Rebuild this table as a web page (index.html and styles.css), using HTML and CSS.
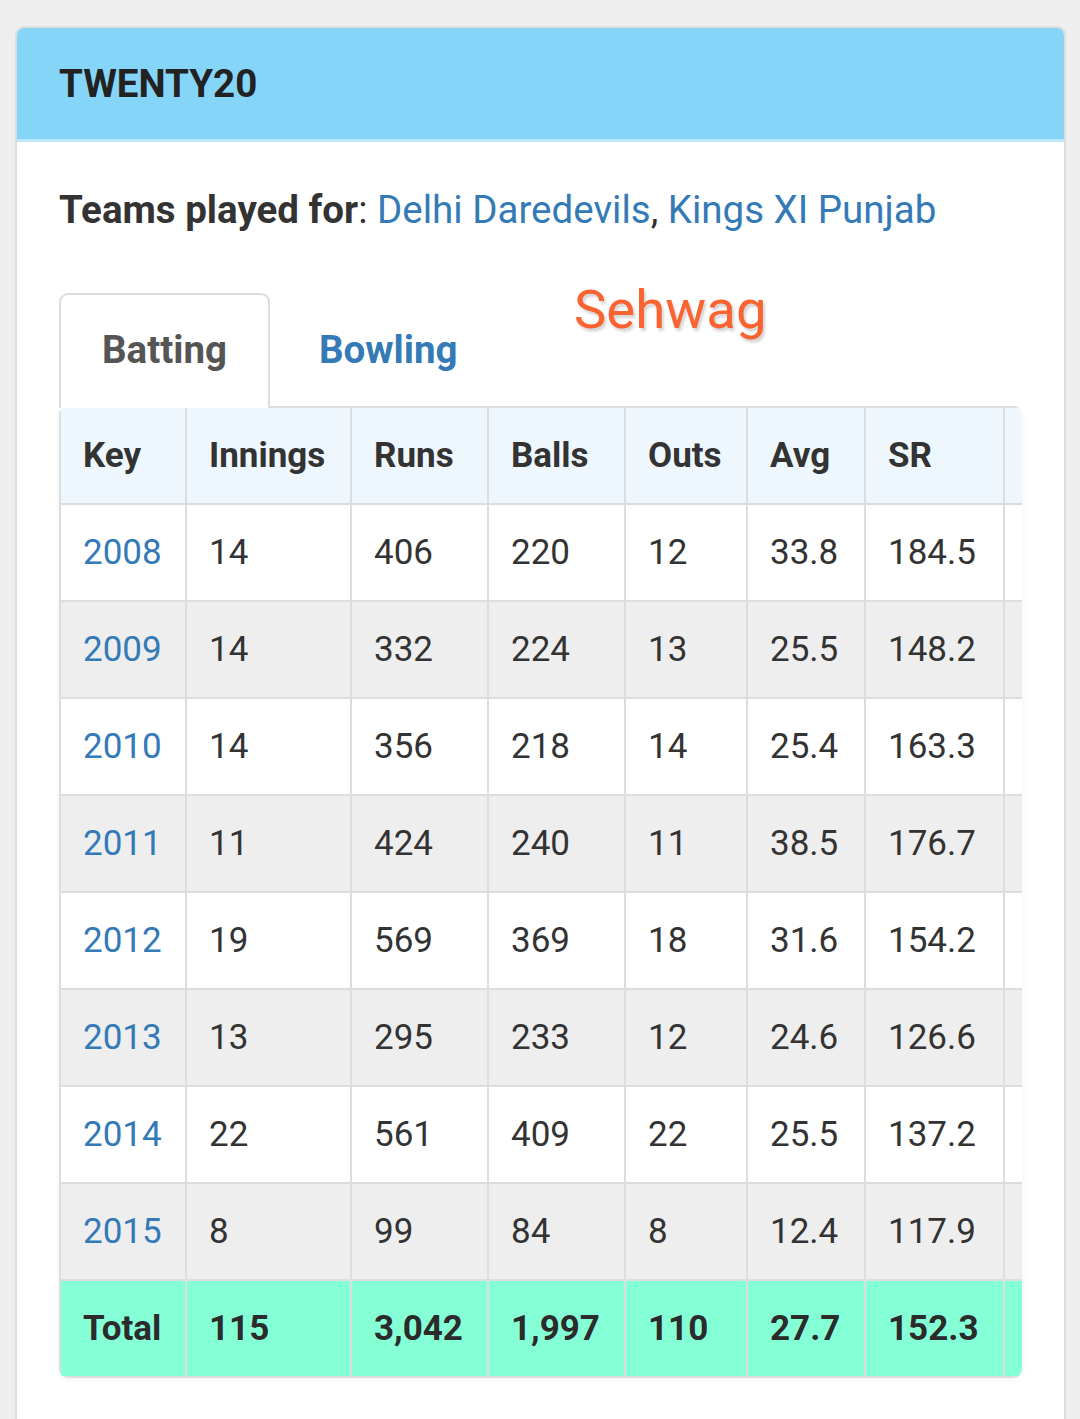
FILE: index.html
```html
<!DOCTYPE html>
<html>
<head>
<meta charset="utf-8">
<link rel="stylesheet" href="styles.css">
</head>
<body>
<div class="card">
  <div class="card-head"><h2 class="card-title">TWENTY20</h2></div>
  <div class="card-body">
    <p class="teams"><b>Teams played for</b>: <a class="link">Delhi Daredevils</a>, <a class="link">Kings XI Punjab</a></p>
    <span class="player">Sehwag</span>
    <ul class="tabs">
      <li class="tab active">Batting</li>
      <li class="tab">Bowling</li>
    </ul>
    <div class="table-wrap">
      <table class="stats">
        <colgroup>
          <col class="c-key"><col class="c-inn"><col class="c-runs"><col class="c-balls"><col class="c-outs"><col class="c-avg"><col class="c-sr"><col class="c-hs">
        </colgroup>
        <thead>
          <tr><th>Key</th><th>Innings</th><th>Runs</th><th>Balls</th><th>Outs</th><th>Avg</th><th>SR</th><th></th></tr>
        </thead>
        <tbody>
          <tr><td class="yr">2008</td><td>14</td><td>406</td><td>220</td><td>12</td><td>33.8</td><td>184.5</td><td></td></tr>
          <tr><td class="yr">2009</td><td>14</td><td>332</td><td>224</td><td>13</td><td>25.5</td><td>148.2</td><td></td></tr>
          <tr><td class="yr">2010</td><td>14</td><td>356</td><td>218</td><td>14</td><td>25.4</td><td>163.3</td><td></td></tr>
          <tr><td class="yr">2011</td><td>11</td><td>424</td><td>240</td><td>11</td><td>38.5</td><td>176.7</td><td></td></tr>
          <tr><td class="yr">2012</td><td>19</td><td>569</td><td>369</td><td>18</td><td>31.6</td><td>154.2</td><td></td></tr>
          <tr><td class="yr">2013</td><td>13</td><td>295</td><td>233</td><td>12</td><td>24.6</td><td>126.6</td><td></td></tr>
          <tr><td class="yr">2014</td><td>22</td><td>561</td><td>409</td><td>22</td><td>25.5</td><td>137.2</td><td></td></tr>
          <tr><td class="yr">2015</td><td>8</td><td>99</td><td>84</td><td>8</td><td>12.4</td><td>117.9</td><td></td></tr>
          <tr class="total"><td>Total</td><td>115</td><td>3,042</td><td>1,997</td><td>110</td><td>27.7</td><td>152.3</td><td></td></tr>
        </tbody>
      </table>
    </div>
  </div>
</div>
</body>
</html>
```
FILE: styles.css
```css
html, body {
  margin: 0;
  padding: 0;
  background: #eeeeee;
  font-family: Roboto, "Noto Sans", "Liberation Sans", sans-serif;
  color: #333333;
}

.card {
  margin: 26px 14px 0 15px;
  background: #ffffff;
  border: 2px solid #dddddd;
  border-bottom: none;
  border-radius: 9px 9px 0 0;
  min-height: 1420px;
}

.card-head {
  height: 111px;
  background: #84d5f8;
  border-bottom: 3px solid #bde8fb;
  border-radius: 7px 7px 0 0;
  display: flex;
  align-items: center;
  padding: 0 42px;
}

.card-title {
  margin: 0;
  font-size: 38.5px;
  font-weight: 700;
  line-height: 44px;
  color: #222222;
}

.card-body {
  position: relative;
  padding: 40px 42px 0 42px;
}

.teams {
  margin: 0;
  font-size: 38.5px;
  line-height: 55px;
  color: #333333;
}

.teams b {
  font-weight: 700;
}

.link {
  color: #337ab7;
  text-decoration: none;
}

.player {
  position: absolute;
  left: 557px;
  top: 136px;
  font-size: 54.5px;
  line-height: 62px;
  color: #fb6330;
  text-shadow: 2px 3px 3px rgba(0, 0, 0, 0.18);
}

.tabs {
  list-style: none;
  margin: 56px 0 -2px 0;
  padding: 0;
  display: flex;
  position: relative;
  z-index: 1;
}

.tab {
  font-size: 38.5px;
  font-weight: 700;
  line-height: 54px;
  padding: 28px 41px 29px 41px;
  border: 2px solid transparent;
  border-bottom: none;
  border-radius: 9px 9px 0 0;
  color: #337ab7;
  margin-right: 6px;
}

.tab.active {
  color: #555555;
  background: #ffffff;
  border-color: #dddddd;
  padding-bottom: 31px;
}

.table-wrap {
  border-radius: 9px;
  overflow: hidden;
  box-shadow: 0 2px 6px rgba(0, 0, 0, 0.05);
}

.stats {
  border-collapse: collapse;
  table-layout: fixed;
  width: 1094px;
  border: 2px solid #dddddd;
  font-size: 35px;
}

.c-key { width: 126px; }
.c-inn { width: 165px; }
.c-runs { width: 137px; }
.c-balls { width: 137px; }
.c-outs { width: 122px; }
.c-avg { width: 118px; }
.c-sr { width: 139px; }
.c-hs { width: 150px; }

.stats th,
.stats td {
  border: 2px solid #dddddd;
  padding: 21px 0 21px 22px;
  line-height: 53px;
  text-align: left;
  white-space: nowrap;
  overflow: hidden;
}

.stats th {
  background: #eef7fe;
  font-weight: 700;
  color: #333333;
}

.stats tbody tr:nth-child(even) td {
  background: #eeeeee;
}

.stats tbody tr:nth-child(odd) td {
  background: #ffffff;
}

.stats td.yr {
  color: #337ab7;
}

.stats tbody tr.total td {
  background: #84ffd6;
  font-weight: 700;
  color: #2b2b2b;
}
```
